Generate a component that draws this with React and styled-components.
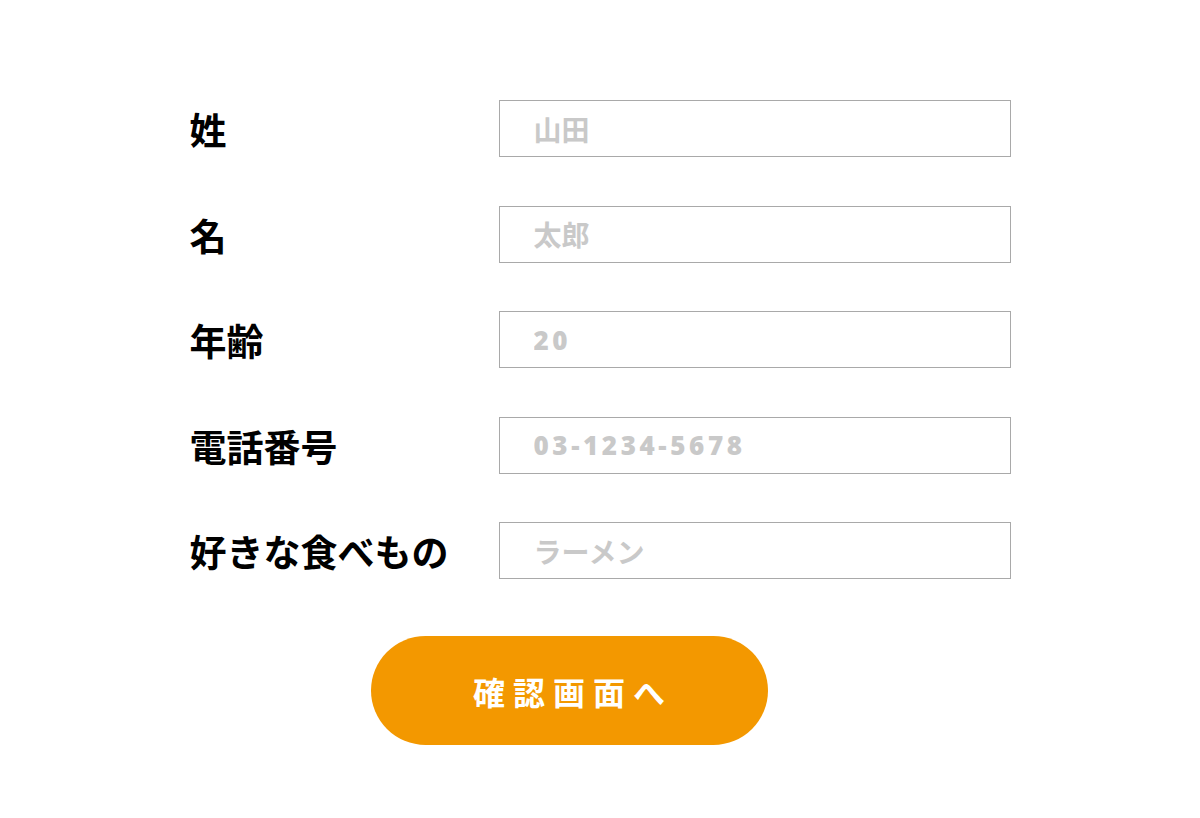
import styled, { createGlobalStyle } from "styled-components";

const GlobalStyle = createGlobalStyle`
  html, body {
    margin: 0;
    padding: 0;
    background: #fff;
  }
  body {
    font-family: "Noto Sans CJK JP", "Noto Sans", sans-serif;
  }
`;

const Page = styled.div`
  width: 1200px;
  height: 818px;
  padding-top: 100px;
  box-sizing: border-box;
`;

const Form = styled.form`
  width: 821px;
  margin: 0 auto;
  display: flex;
  flex-direction: column;
  gap: 48.5px;
`;

const Row = styled.div`
  display: grid;
  grid-template-columns: 309px 512px;
  align-items: center;
  height: 57px;
`;

const Label = styled.label`
  font-size: 37px;
  font-weight: 700;
  color: #000;
  line-height: 1;
  padding-top: 2px;
  white-space: nowrap;
`;

const Field = styled.input`
  box-sizing: border-box;
  width: 512px;
  height: 57px;
  border: 1px solid #a9a9a9;
  border-radius: 0;
  padding: 0 0 0 34px;
  font-family: ${(p) =>
    p.$latin ? `"Open Sans", sans-serif` : `"Noto Sans CJK JP", sans-serif`};
  font-size: ${(p) => (p.$latin ? "26px" : "28px")};
  font-weight: ${(p) => (p.$latin ? 800 : 700)};
  letter-spacing: ${(p) => (p.$latin ? "3.6px" : "0")};
  color: #333;
  outline: none;

  &::placeholder {
    color: #c9c9c9;
  }
`;

const Actions = styled.div`
  display: flex;
  padding-left: 181px;
  margin-top: 8.5px;
`;

const Submit = styled.button`
  width: 397px;
  height: 109px;
  border: none;
  border-radius: 55px;
  background: #f39800;
  color: #fff;
  font-family: "Noto Sans CJK JP", sans-serif;
  font-size: 32px;
  font-weight: 700;
  letter-spacing: 8px;
  padding: 0 0 0 8px;
  cursor: pointer;
`;

const fields = [
  { label: "姓", placeholder: "山田" },
  { label: "名", placeholder: "太郎" },
  { label: "年齢", placeholder: "20", latin: true },
  { label: "電話番号", placeholder: "03-1234-5678", latin: true },
  { label: "好きな食べもの", placeholder: "ラーメン" },
];

export default function App() {
  return (
    <Page>
      <GlobalStyle />
      <Form onSubmit={(e) => e.preventDefault()}>
        {fields.map((f) => (
          <Row key={f.label}>
            <Label>{f.label}</Label>
            <Field placeholder={f.placeholder} $latin={f.latin} />
          </Row>
        ))}
        <Actions>
          <Submit type="submit">確認画面へ</Submit>
        </Actions>
      </Form>
    </Page>
  );
}
